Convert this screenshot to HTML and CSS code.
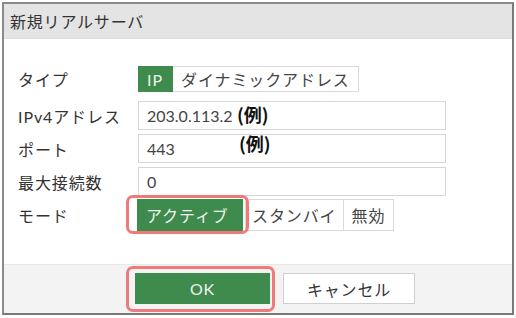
FILE: index.html
```html
<!DOCTYPE html>
<html lang="ja">
<head>
<meta charset="UTF-8">
<title>新規リアルサーバ</title>
<link rel="stylesheet" href="styles.css">
</head>
<body>

<div class="dialog">
  <div class="dialog-title">新規リアルサーバ</div>

  <div class="dialog-body">
    <div class="form-row type-row">
      <label class="field-label">タイプ</label>
      <div class="toggle">
        <span class="toggle-btn active ip">IP</span>
        <span class="toggle-btn">ダイナミックアドレス</span>
      </div>
    </div>

    <div class="form-row">
      <label class="field-label">IPv4アドレス</label>
      <div class="text-field">203.0.113.2<span class="note note-ip">(例)</span></div>
    </div>

    <div class="form-row">
      <label class="field-label">ポート</label>
      <div class="text-field">443<span class="note note-port">(例)</span></div>
    </div>

    <div class="form-row">
      <label class="field-label">最大接続数</label>
      <div class="text-field">0</div>
    </div>

    <div class="form-row">
      <label class="field-label">モード</label>
      <div class="toggle mode">
        <span class="toggle-btn active marked mark-mode">アクティブ</span>
        <span class="toggle-btn">スタンバイ</span>
        <span class="toggle-btn">無効</span>
      </div>
    </div>
  </div>

  <div class="dialog-footer">
    <button class="btn btn-primary marked mark-ok">OK</button>
    <button class="btn">キャンセル</button>
  </div>
</div>

</body>
</html>
```

FILE: styles.css
```css
/* Page */
body {
  margin: 0;
  padding: 2px;
  background: #ffffff;
  font-family: "Lato", "Noto Sans CJK JP", sans-serif;
  font-size: 16px;
  color: #333;
}

/* Dialog frame */
.dialog {
  width: 508px;
  height: 309px;
  border: 2px solid #8a8a8a;
  border-right-color: #7a7a7a;
  border-bottom-color: #7a7a7a;
  display: flex;
  flex-direction: column;
  background: #fff;
}

.dialog-title {
  height: 34px;
  background: #e4e4e4;
  border-bottom: 1px solid #dcdcdc;
  padding-left: 6px;
  display: flex;
  align-items: center;
  font-size: 16px;
  letter-spacing: 0.8px;
  color: #333;
}

.dialog-body {
  flex: 1;
  padding: 27px 0 0 14px;
}

/* Form rows */
.form-row {
  display: flex;
  align-items: center;
  height: 29px;
  margin-bottom: 4px;
}

.type-row {
  height: 26px;
  margin-bottom: 9px;
}

.field-label {
  width: 120px;
  font-size: 16px;
  letter-spacing: 0.9px;
  color: #333;
}

.text-field {
  position: relative;
  width: 298px;
  height: 27px;
  border: 1px solid #d6d6d6;
  padding-left: 8px;
  display: flex;
  align-items: center;
  font-size: 16px;
  color: #444;
}

/* Annotations */
.note {
  position: absolute;
  font-family: "Noto Sans CJK JP", sans-serif;
  font-weight: bold;
  font-size: 18px;
  color: #111;
}

.note-ip {
  left: 98px;
  top: -1px;
}

.note-port {
  left: 100px;
  top: -5px;
}

/* Toggle buttons */
.toggle {
  display: flex;
  height: 26px;
}

.toggle-btn {
  display: flex;
  align-items: center;
  padding: 0 8px;
  border: 1px solid #dadada;
  border-left: none;
  background: #fff;
  color: #444;
  font-size: 16px;
  letter-spacing: 0.9px;
  white-space: nowrap;
}

.toggle-btn:first-child {
  border-left: 1px solid #dadada;
}

.toggle-btn.active {
  background: #3f8b4e;
  border-color: #3f8b4e;
  color: #eef5ee;
}

.toggle-btn.ip {
  width: 17px;
}

.toggle.mode {
  height: 32px;
  margin-left: -1px;
}

.toggle.mode .toggle-btn.active {
  width: 88px;
  height: 30px;
  align-self: center;
}

.toggle.mode .toggle-btn:nth-child(2) {
  margin-left: 2px;
  border-left: 1px solid #dadada;
  padding: 0 6px;
}

.toggle.mode .toggle-btn:nth-child(3) {
  padding: 0 8px;
}

/* Red outline marks */
.marked {
  position: relative;
}

.marked::after {
  content: "";
  position: absolute;
  border: 3px solid #f07a7a;
  border-radius: 7px;
}

.mark-mode::after {
  left: -12px;
  right: -7px;
  top: -5px;
  bottom: -4px;
}

.mark-ok::after {
  left: -10px;
  right: -6px;
  top: -8px;
  bottom: -9px;
}

/* Footer */
.dialog-footer {
  height: 40px;
  background: #f3f3f3;
  border-top: 1px solid #e8e8e8;
  padding: 8px 0 0 131px;
  display: flex;
  align-items: flex-start;
  gap: 13px;
}

.btn {
  height: 31px;
  width: 132px;
  border: 1px solid #cfcfcf;
  background: #fff;
  color: #333;
  font-family: inherit;
  font-size: 16px;
  letter-spacing: 0.8px;
  padding: 0;
}

.btn-primary {
  width: 135px;
  background: #3f8b4e;
  border-color: #3f8b4e;
  color: #eef5ee;
}
```
